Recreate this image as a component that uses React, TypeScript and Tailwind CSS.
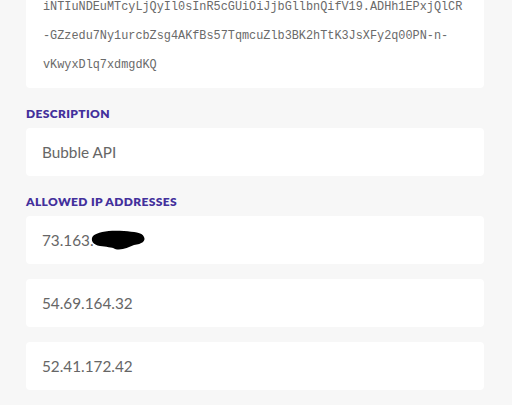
const ips = ["54.69.164.32", "52.41.172.42"];

function Label({ children }: { children: string }) {
  return (
    <div className="text-[12px] font-extrabold tracking-[0.03em] text-[#43309c] leading-none h-[14px] flex items-center">
      {children}
    </div>
  );
}

function Field({ children }: { children: React.ReactNode }) {
  return (
    <div className="bg-white rounded-[4px] h-[48px] flex items-center pl-[16px] text-[15.3px] text-[#666666]">
      {children}
    </div>
  );
}

function App() {
  return (
    <div className="w-[512px] h-[405px] overflow-hidden bg-[#f7f7f7] font-['Lato','Liberation_Sans',sans-serif]">
      <div className="mx-[26px] w-[458px] flex flex-col">
        <div className="-mt-[22px] bg-white rounded-[4px] pl-[17px] pt-[15px] pb-[8px] font-['Liberation_Mono',monospace] text-[11.85px] leading-[29px] text-[#6a6a6a]">
          <div>iNTIuNDEuMTcyLjQyIl0sInR5cGUiOiJjbGllbnQifV19.ADHh1EPxjQlCR</div>
          <div>-GZzedu7Ny1urcbZsg4AKfBs57TqmcuZlb3BK2hTtK3JsXFy2q00PN-n-</div>
          <div>vKwyxDlq7xdmgdKQ</div>
        </div>

        <div className="mt-[19px]">
          <Label>DESCRIPTION</Label>
        </div>
        <div className="mt-[7px]">
          <Field>Bubble API</Field>
        </div>

        <div className="mt-[19px]">
          <Label>ALLOWED IP ADDRESSES</Label>
        </div>
        <div className="mt-[7px] flex flex-col gap-[15px]">
          <Field>
            <span className="flex items-center">
              73.163.
              <svg width="56" height="22" viewBox="0 0 56 22" className="-ml-[4px] mt-[2px]">
                <path
                  d="M3 6 C8 1 22 0 34 1 C44 2 52 2 54 7 C56 11 52 14 44 15 C38 17 32 21 25 19 C22 17 16 17 10 16 C3 15 0 10 3 6 Z"
                  fill="#000"
                />
              </svg>
            </span>
          </Field>
          {ips.map((ip) => (
            <Field key={ip}>{ip}</Field>
          ))}
        </div>
      </div>
    </div>
  );
}

export default App;
